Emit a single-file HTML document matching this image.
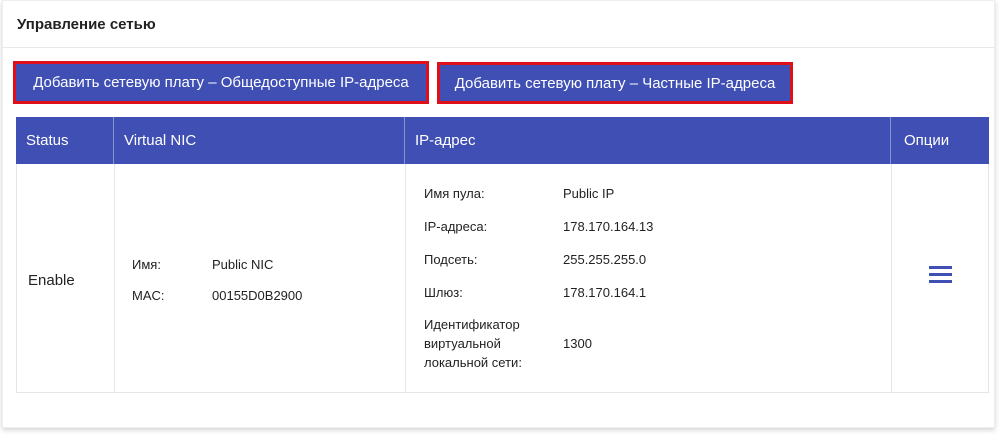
<!DOCTYPE html>
<html><head><meta charset="utf-8"><style>
body{margin:0;background:#fff;font-family:"Liberation Sans","Noto Sans CJK SC",sans-serif;width:1004px;height:444px;overflow:hidden;position:relative}
.card{position:absolute;left:2px;top:0;width:993px;height:428px;background:#fff;box-shadow:0 2px 5px rgba(0,0,0,.18);border:1px solid #eee;box-sizing:border-box}
.title{position:absolute;left:14px;top:15px;font-size:15px;font-weight:bold;color:#222}
.hl{position:absolute;left:0;right:0;top:46px;border-top:1px solid #e8e8e8}
.btn{position:absolute;background:#3f4fb3;color:#fff;font-size:15px;border:3px solid #e0101a;box-sizing:border-box;text-align:center;line-height:38px;white-space:nowrap}
.t{position:absolute;left:16px;top:117px;width:973px;height:276px;border:1px solid #e6e6e6;box-sizing:border-box}
.hd{position:absolute;top:117px;height:47px;background:#3f4fb3;color:#fff;font-size:15px;line-height:47px;padding-left:10px;box-sizing:border-box;border-right:1px solid #8a93d0}
.vl{position:absolute;top:164px;height:228px;border-left:1px solid #e6e6e6}
.s{position:absolute;font-size:13px;color:#222}
</style></head><body>
<div class="card">
<div class="title">Управление сетью</div>
<div class="hl"></div>
</div>
<div class="btn" style="left:13px;top:61px;width:416px;height:43px">Добавить сетевую плату – Общедоступные IP-адреса</div>
<div class="btn" style="left:437px;top:62px;width:356px;height:42px">Добавить сетевую плату – Частные IP-адреса</div>
<div class="t"></div>
<div class="hd" style="left:16px;width:98px;">Status</div>
<div class="hd" style="left:114px;width:291px">Virtual NIC</div>
<div class="hd" style="left:405px;width:486px">IP-адрес</div>
<div class="hd" style="left:891px;width:98px;padding-left:13px;border-right:none">Опции</div>
<div class="vl" style="left:114px"></div><div class="vl" style="left:405px"></div><div class="vl" style="left:891px"></div>
<div class="s" style="left:28px;top:272px;font-size:15px">Enable</div>
<div class="s" style="left:132px;top:257px">Имя:</div><div class="s" style="left:212px;top:257px">Public NIC</div>
<div class="s" style="left:132px;top:288px">MAC:</div><div class="s" style="left:212px;top:288px">00155D0B2900</div>
<div class="s" style="left:424px;top:186px">Имя пула:</div><div class="s" style="left:563px;top:186px">Public IP</div>
<div class="s" style="left:424px;top:219px">IP-адреса:</div><div class="s" style="left:563px;top:219px">178.170.164.13</div>
<div class="s" style="left:424px;top:252px">Подсеть:</div><div class="s" style="left:563px;top:252px">255.255.255.0</div>
<div class="s" style="left:424px;top:285px">Шлюз:</div><div class="s" style="left:563px;top:285px">178.170.164.1</div>
<div class="s" style="left:424px;top:315px;line-height:19px">Идентификатор<br>виртуальной<br>локальной сети:</div><div class="s" style="left:563px;top:336px">1300</div>
<div style="position:absolute;left:929px;top:266px;width:23px;height:3px;background:#3f4fb3"></div>
<div style="position:absolute;left:929px;top:273px;width:23px;height:3px;background:#3f4fb3"></div>
<div style="position:absolute;left:929px;top:280px;width:23px;height:3px;background:#3f4fb3"></div>
</body></html>
